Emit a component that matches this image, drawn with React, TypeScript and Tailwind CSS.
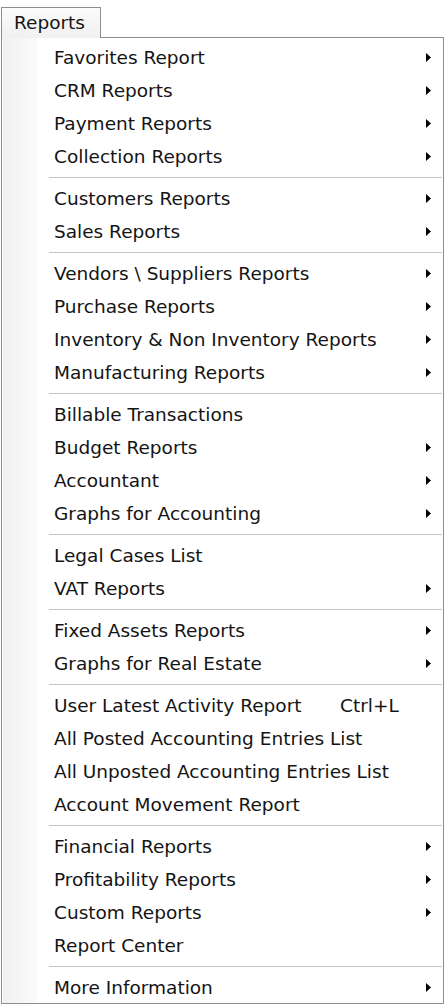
const sections: { label: string; sub?: boolean; key?: string }[][] = [
  [
    { label: "Favorites Report", sub: true },
    { label: "CRM Reports", sub: true },
    { label: "Payment Reports", sub: true },
    { label: "Collection Reports", sub: true },
  ],
  [
    { label: "Customers Reports", sub: true },
    { label: "Sales Reports", sub: true },
  ],
  [
    { label: "Vendors \\ Suppliers Reports", sub: true },
    { label: "Purchase Reports", sub: true },
    { label: "Inventory & Non Inventory Reports", sub: true },
    { label: "Manufacturing Reports", sub: true },
  ],
  [
    { label: "Billable Transactions" },
    { label: "Budget Reports", sub: true },
    { label: "Accountant", sub: true },
    { label: "Graphs for Accounting", sub: true },
  ],
  [
    { label: "Legal Cases List" },
    { label: "VAT Reports", sub: true },
  ],
  [
    { label: "Fixed Assets Reports", sub: true },
    { label: "Graphs for Real Estate", sub: true },
  ],
  [
    { label: "User Latest Activity Report", key: "Ctrl+L" },
    { label: "All Posted Accounting Entries List" },
    { label: "All Unposted Accounting Entries List" },
    { label: "Account Movement Report" },
  ],
  [
    { label: "Financial Reports", sub: true },
    { label: "Profitability Reports", sub: true },
    { label: "Custom Reports", sub: true },
    { label: "Report Center" },
  ],
  [{ label: "More Information", sub: true }],
];

const Arrow = () => (
  <svg width="5" height="9" viewBox="0 0 5 9" className="absolute left-[424px]">
    <path d="M0 0 L5 4.5 L0 9 Z" fill="#000" />
  </svg>
);

export default function App() {
  return (
    <div
      className="w-[446px] h-[1006px] bg-white pt-[7px] pl-px text-[18.5px] text-[#141414]"
      style={{ fontFamily: '"DejaVu Sans", Tahoma, sans-serif' }}
    >
      <div className="relative z-10 -mb-px w-[100px] h-[31px] border border-b-0 border-[#8e8e8e] bg-gradient-to-b from-[#fbfbfb] to-[#f0f0f0] pl-[12px] leading-[29px]">
        Reports
      </div>
      <div className="relative w-[443px] h-[967px] border border-[#8e8e8e] bg-white pt-[3px]">
        <div className="absolute left-px top-0 bottom-0 w-[35px] bg-gradient-to-r from-[#f0f0f0] to-[#fbfbfb]" />
        {sections.map((items, i) => (
          <div key={i} className="relative">
            {i > 0 && (
              <div className="h-[9px] flex items-center pl-[47px] pr-[1px]">
                <div className="w-full h-px bg-[#c6c6c6]" />
              </div>
            )}
            {items.map((it) => (
              <div key={it.label} className="relative h-[33px] flex items-center pl-[52px]">
                <span className="whitespace-nowrap">{it.label}</span>
                {it.key && <span className="absolute left-[338px]">{it.key}</span>}
                {it.sub && <Arrow />}
              </div>
            ))}
          </div>
        ))}
      </div>
    </div>
  );
}
